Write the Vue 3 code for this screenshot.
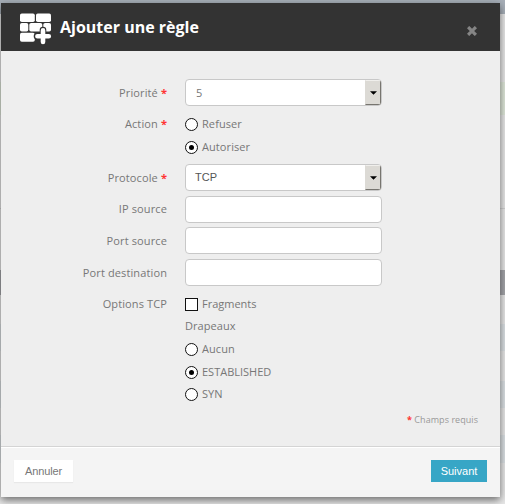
<script setup>
import { ref } from 'vue'

const priority = ref('5')
const action = ref('Autoriser')
const protocol = ref('TCP')
const flag = ref('ESTABLISHED')
const fields = ['IP source', 'Port source', 'Port destination']
const bands = [
  { h: 14, c: '#a7afb8' },
  { h: 68, c: '#e8e8e8' },
  { h: 33, c: '#dfe8da' },
  { h: 93, c: '#e8e8e8' },
  { h: 1, c: '#d2d2d2' },
  { h: 61, c: '#e8e8e8' },
  { h: 25, c: '#a5a6aa' },
  { h: 29, c: '#e8e8e8' },
  { h: 27, c: '#dce1e4' },
  { h: 30, c: '#e8e8e8' },
  { h: 27, c: '#dce1e4' },
  { h: 27, c: '#e8e8e8' },
  { h: 28, c: '#dce1e4' },
  { h: 41, c: '#e8e8e8' },
]
</script>

<template>
  <div class="page">
    <div class="backdrop">
      <div v-for="(b, i) in bands" :key="i" :style="{ height: b.h + 'px', background: b.c }"></div>
    </div>
    <section class="modal">
      <header>
        <svg class="wall" width="32" height="32" viewBox="0 0 32 32">
          <g fill="#fff">
            <rect x="0" y="0.5" width="14.8" height="8.5" rx="1.8" />
            <rect x="16" y="0.5" width="15" height="8.5" rx="1.8" />
            <rect x="0" y="9.9" width="8.3" height="8.7" rx="1.8" />
            <rect x="9.3" y="9.9" width="13" height="8.7" rx="1.8" />
            <rect x="23.3" y="9.9" width="7.7" height="8.7" rx="1.8" />
            <rect x="0" y="19.7" width="14.8" height="9" rx="1.8" />
          </g>
          <path d="M23 17v12M17 23.3h12" fill="none" stroke="#333" stroke-width="6.6" stroke-linecap="round" />
          <path d="M23 17.4v11.6M17.4 23.3h11.4" fill="none" stroke="#fff" stroke-width="4.6" stroke-linecap="round" />
        </svg>
        <h1>Ajouter une règle</h1>
        <svg class="close" width="10" height="10" viewBox="0 0 10 10">
          <path d="M2.2 2.2l5.6 5.6M7.8 2.2l-5.6 5.6" stroke="#858585" stroke-width="3.2" stroke-linecap="square" />
        </svg>
      </header>

      <div class="body">
        <div class="row first">
          <div class="label">Priorité <b>*</b></div>
          <div class="box select open-sans"><span>{{ priority }}</span><i><svg width="7" height="4" viewBox="0 0 7 4"><path d="M0 0.3h7L3.5 3.8z" /></svg></i></div>
        </div>
        <div class="row action">
          <div class="label">Action <b>*</b></div>
          <div class="choices">
            <label v-for="a in ['Refuser', 'Autoriser']" :key="a" @click="action = a">
              <span class="radio" :class="{ on: action === a }"></span><span class="txt">{{ a }}</span>
            </label>
          </div>
        </div>
        <div class="row proto">
          <div class="label">Protocole <b>*</b></div>
          <div class="box select"><span>{{ protocol }}</span><i><svg width="7" height="4" viewBox="0 0 7 4"><path d="M0 0.3h7L3.5 3.8z" /></svg></i></div>
        </div>
        <div v-for="(f, i) in fields" :key="f" class="row text" :class="'t' + i">
          <div class="label">{{ f }}</div>
          <div class="box"></div>
        </div>
        <div class="row options">
          <div class="label">Options TCP</div>
          <div class="choices">
            <label><span class="check"></span><span>Fragments</span></label>
            <div class="sub">Drapeaux</div>
            <label v-for="o in ['Aucun', 'ESTABLISHED', 'SYN']" :key="o" :class="o" @click="flag = o">
              <span class="radio" :class="{ on: flag === o }"></span><span class="txt">{{ o }}</span>
            </label>
          </div>
        </div>
        <p class="required"><b>*</b> Champs requis</p>
      </div>

      <footer>
        <button class="cancel">Annuler</button>
        <button class="next">Suivant</button>
      </footer>
    </section>
  </div>
</template>

<style>
body { margin: 0; overflow: hidden; }
</style>

<style scoped>
* { box-sizing: border-box; }
.page {
  position: relative;
  width: 505px;
  height: 504px;
  padding: 3px 0 0 1px;
  overflow: hidden;
  font-family: 'Open Sans', sans-serif;
  font-size: 11px;
  color: #777;
}
.backdrop { position: absolute; inset: 0; }
.modal {
  position: relative;
  display: flex;
  flex-direction: column;
  width: 499px;
  height: 494px;
  background: #eee;
  box-shadow: 0 3px 8px rgba(0, 0, 0, 0.55);
}
header {
  display: flex;
  align-items: center;
  height: 48px;
  padding: 0 23px 0 19px;
  background: #333;
}
.wall { margin-top: 4px; }
h1 {
  flex: 1;
  margin: 0 0 0 8px;
  font-size: 16px;
  font-weight: 700;
  line-height: 20px;
  color: #fff;
  white-space: nowrap;
}
.close { margin-top: 7px; }
.body { height: 395px; padding-top: 28px; }
.row { display: flex; gap: 17px; line-height: 27px; }
.label {
  width: 167px;
  padding-right: 1px;
  text-align: right;
  letter-spacing: 0.12px;
  white-space: nowrap;
}
b { color: #f33; font-weight: 700; }
.box {
  display: flex;
  width: 197px;
  height: 27px;
  border: 1px solid #c8c8c8;
  border-radius: 4px;
  background: #fff;
  overflow: hidden;
}
.select { justify-content: space-between; font-family: 'Liberation Sans', sans-serif; color: #555; line-height: 25px; }
.select span { padding-left: 9px; }
.open-sans { font-family: 'Open Sans', sans-serif; color: #777; }
.open-sans span { padding-left: 10px; }
.select i {
  display: flex;
  align-items: center;
  justify-content: center;
  width: 16px;
  height: 25px;
  background: #dcdad5;
  border: 1px solid;
  border-color: #f0efec #77756f #77756f #dcdad5;
}
.action { margin-top: 7px; line-height: 23px; }
.action .label { line-height: 22px; }
.proto { margin-top: 5px; }
.t0 { margin-top: 5px; }
.t0 .label { line-height: 26px; }
.t1 { margin-top: 4px; }
.t2 { margin-top: 5px; }
.options { margin-top: 7px; line-height: 22px; }
.choices label {
  display: flex;
  align-items: center;
  gap: 4px;
  height: 23px;
  letter-spacing: 0.08px;
}
.txt { padding-bottom: 1px; line-height: 20px; }
.options label:first-child { height: 22px; letter-spacing: 0; }
.options .ESTABLISHED { height: 22px; letter-spacing: 0; }
.sub { height: 23px; letter-spacing: 0.05px; }
.radio, .check {
  width: 13px;
  height: 13px;
  border: 1px solid #111;
  background: #fff;
}
.radio { display: flex; align-items: center; justify-content: center; border-radius: 50%; }
.radio.on::after { content: ''; width: 5px; height: 5px; border-radius: 50%; background: #000; }
.required {
  margin: 7px 22px 0 0;
  font-size: 9px;
  line-height: 14px;
  text-align: right;
  letter-spacing: 0.05px;
  color: #999;
}
footer {
  display: flex;
  justify-content: space-between;
  height: 51px;
  padding: 13px 13px 0 13px;
  border-top: 1px solid #d4d4d4;
  background: #f4f4f4;
  box-shadow: inset 0 1px #fff;
}
button {
  height: 22px;
  padding: 0;
  border: 0;
  font: 11px/22px 'Liberation Sans', sans-serif;
}
.cancel { width: 59px; background: #fff; color: #777; letter-spacing: -0.1px; box-shadow: 0 1px 1px #e8e8e8; }
.next { width: 56px; background: #37a6c6; color: #fff; }
</style>
